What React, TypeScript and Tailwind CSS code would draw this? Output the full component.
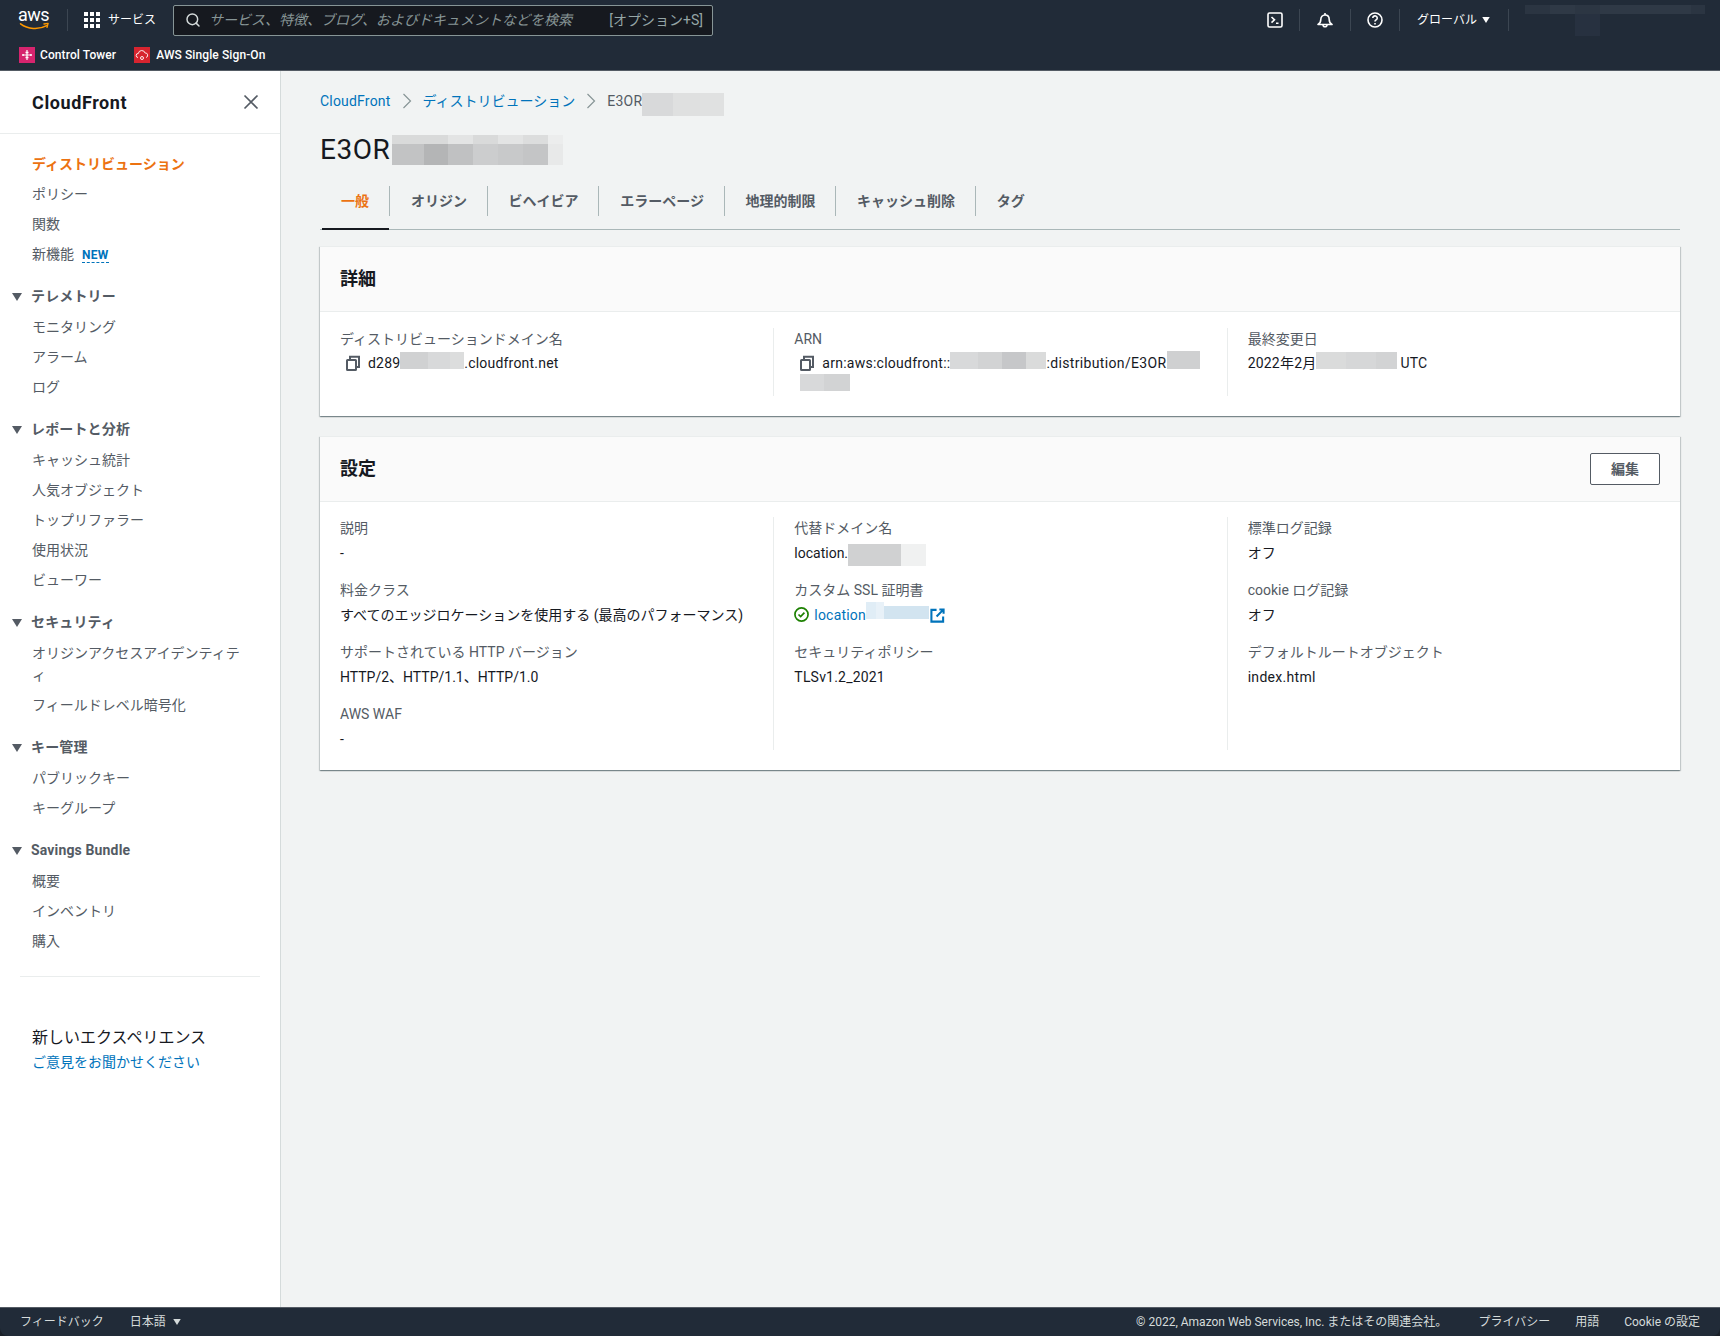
import { Search } from "lucide-react";
import type { ReactNode } from "react";

const sans = "font-['Roboto','Noto_Sans_CJK_JP',sans-serif]";

function Caret({ className }: { className: string }) {
  return (
    <svg viewBox="0 0 10 8" className={className} fill="currentColor">
      <path d="M0 0h10L5 8z" />
    </svg>
  );
}

function Sep() {
  return <div className="h-[22px] w-px bg-[#3c4652]" />;
}

function AwsLogo() {
  return (
    <div className="relative h-[26px] w-[33px]">
      <span className="absolute left-0 top-[-3px] text-[18px] leading-[22px] tracking-[-0.5px] text-white">aws</span>
      <svg viewBox="0 0 33 10" className="absolute bottom-[2px] left-0 h-[9px] w-[33px]" fill="none">
        <path d="M1 2c8 6 20 7 29 2" stroke="#f90" strokeWidth="1.7" strokeLinecap="round" />
        <path d="M27 2.2l4.6-.6-1.2 4.4" stroke="#f90" strokeWidth="1.5" strokeLinecap="round" strokeLinejoin="round" />
      </svg>
    </div>
  );
}

function GridIcon() {
  return (
    <svg viewBox="0 0 16 16" className="h-4 w-4" fill="#fff">
      <rect x="0" y="0" width="4" height="4" />
      <rect x="6" y="0" width="4" height="4" />
      <rect x="12" y="0" width="4" height="4" />
      <rect x="0" y="6" width="4" height="4" />
      <rect x="6" y="6" width="4" height="4" />
      <rect x="12" y="6" width="4" height="4" />
      <rect x="0" y="12" width="4" height="4" />
      <rect x="6" y="12" width="4" height="4" />
      <rect x="12" y="12" width="4" height="4" />
    </svg>
  );
}

function CopyIcon() {
  return (
    <svg viewBox="0 0 16 16" className="h-4 w-4 shrink-0" fill="none" stroke="#545b64" strokeWidth="2">
      <rect x="2" y="5" width="9" height="10" rx="0.5" />
      <path d="M5 5V1.800h9V12h-3" />
    </svg>
  );
}

function Header() {
  return (
    <header className="h-[71px] shrink-0 border-b border-[#545b64] bg-[#212b38]">
      <div className="flex h-10 items-center pl-[18px] pr-[15px]">
        <AwsLogo />
        <div className="ml-[16px] h-[22px] w-px bg-[#3c4652]" />
        <div className="ml-4 flex items-center gap-2 text-[12px] text-white">
          <GridIcon />
          <span>サービス</span>
        </div>
        <div className="ml-[17px] flex h-[31px] w-[540px] items-center rounded-[2px] border border-[#879596] bg-[#16191f] pl-[11px] pr-[9px]">
          <Search className="h-4 w-4 text-[#d5dbdb]" strokeWidth={2.2} />
          <span className="ml-[8px] text-[14px] italic text-[#879596]">サービス、特徴、ブログ、およびドキュメントなどを検索</span>
          <span className="ml-auto text-[14px] text-[#95a5a6]">[オプション+S]</span>
        </div>
        <div className="ml-auto flex items-center">
          <svg viewBox="0 0 16 16" className="h-4 w-4" fill="none" stroke="#fff" strokeWidth="1.6">
            <rect x="1" y="1" width="14" height="14" rx="1.5" />
            <path d="M4.500 5l3 2.800-3 2.800M9 11.200h2.500" />
          </svg>
          <div className="mx-4"><Sep /></div>
          <svg viewBox="0 0 16 16" className="mx-[1px] h-4 w-4" fill="none" stroke="#fff" strokeWidth="1.6" strokeLinejoin="round">
            <path d="M1 12.500c1.800-1 2.800-2.500 2.800-5 0-2.600 1.700-4.500 4.200-4.500s4.200 1.900 4.200 4.500c0 2.500 1 4 2.800 5z" />
            <path d="M8 1v2M6 12.800a2 2 0 004 0" />
          </svg>
          <div className="mx-4"><Sep /></div>
          <svg viewBox="0 0 16 16" className="h-4 w-4" fill="none" stroke="#fff" strokeWidth="1.6">
            <circle cx="8" cy="8" r="7" />
            <path d="M5.800 6a2.200 2.200 0 114 1.300c-.8.8-1.800 1.100-1.800 2.200" />
            <path d="M8 11v1.500" />
          </svg>
          <div className="ml-4 mr-[17px]"><Sep /></div>
          <span className="text-[12px] text-white">グローバル</span>
          <Caret className="ml-[5px] h-[6px] w-2 text-white" />
          <div className="ml-[18px]"><Sep /></div>
          <div className="ml-[16px] flex w-[180px] flex-col">
            <div className="flex">
              <div className="h-[9px] w-[25px] bg-[#2b3542]" />
              <div className="h-[9px] w-[25px] bg-[#2f3946]" />
              <div className="h-[9px] w-[25px] bg-[#2c3643]" />
              <div className="h-[9px] w-[91px] bg-[#2f3946]" />
              <div className="h-[9px] w-[14px] bg-[#2b3542]" />
            </div>
            <div className="ml-[50px] h-[22px] w-[25px] bg-[#273140]" />
          </div>
        </div>
      </div>
      <div className="flex h-[30px] items-center pl-[19px] text-[12px] font-medium tracking-[0.1px] text-white">
        <svg viewBox="0 0 16 16" className="h-4 w-4">
          <rect width="16" height="16" fill="#d6246e" />
          <path d="M8 3v10M4 8h8" stroke="#fff" strokeWidth="1.200" />
          <path d="M3 8h2M11 8h2M6.500 5.500h3M6.500 10.500h3" stroke="#fff" strokeWidth="1.500" />
        </svg>
        <span className="ml-[5px]">Control Tower</span>
        <svg viewBox="0 0 16 16" className="ml-[18px] h-4 w-4">
          <rect width="16" height="16" fill="#d7242f" />
          <path d="M4 10.500a2 2 0 01.3-4 3.500 3.500 0 016.800-.5 2.300 2.300 0 01.9 4.500" fill="none" stroke="#fff" strokeWidth="0.900" />
          <circle cx="8" cy="11" r="1.500" fill="none" stroke="#fff" strokeWidth="0.900" />
        </svg>
        <span className="ml-[6px]">AWS Single Sign-On</span>
      </div>
    </header>
  );
}

function NavItem({ children, className = "text-[#545b64]" }: { children: ReactNode; className?: string }) {
  return <div className={`pl-8 pr-[36px] py-[4px] text-[14px] leading-[22px] ${className}`}>{children}</div>;
}

function NavSection({ title, items }: { title: string; items: string[] }) {
  return (
    <div className="mt-3">
      <div className="flex h-[31px] items-center pl-[12px] text-[14px] font-bold tracking-[0.15px] text-[#545b64]">
        <Caret className="mr-[9px] h-2 w-[10px]" />
        {title}
      </div>
      {items.map((item) => (
        <NavItem key={item}>{item}</NavItem>
      ))}
    </div>
  );
}

function Sidebar() {
  return (
    <aside className="flex w-[281px] shrink-0 flex-col border-r border-[#d5dbdb] bg-white">
      <div className="flex h-[63px] shrink-0 items-center justify-between border-b border-[#eaeded] pl-8 pr-[21px]">
        <h2 className="text-[18px] font-bold tracking-[0.6px] text-[#16191f]">CloudFront</h2>
        <svg viewBox="0 0 16 16" className="h-4 w-4" fill="none" stroke="#545b64" strokeWidth="1.700">
          <path d="M1.500 1.500l13 13M14.500 1.500l-13 13" />
        </svg>
      </div>
      <div className="mt-[15px]">
        <NavItem className="font-bold text-[#ec7211]">ディストリビューション</NavItem>
        <NavItem>ポリシー</NavItem>
        <NavItem>関数</NavItem>
        <NavItem>
          新機能
          <span className="ml-2 border-b border-dashed border-[#0073bb] text-[12px] font-bold leading-[14px] tracking-[0.3px] text-[#0073bb]">NEW</span>
        </NavItem>
      </div>
      <NavSection title="テレメトリー" items={["モニタリング", "アラーム", "ログ"]} />
      <NavSection title="レポートと分析" items={["キャッシュ統計", "人気オブジェクト", "トップリファラー", "使用状況", "ビューワー"]} />
      <NavSection title="セキュリティ" items={["オリジンアクセスアイデンティティ", "フィールドレベル暗号化"]} />
      <NavSection title="キー管理" items={["パブリックキー", "キーグループ"]} />
      <NavSection title="Savings Bundle" items={["概要", "インベントリ", "購入"]} />
      <div className="mx-5 mt-5 border-t border-[#eaeded]" />
      <div className="mt-[49px] pl-8 text-[16px] leading-[24px] text-[#16191f]">新しいエクスペリエンス</div>
      <div className="pl-8 text-[14px] leading-[24px] text-[#0073bb]">ご意見をお聞かせください</div>
    </aside>
  );
}

function Chevron() {
  return (
    <svg viewBox="0 0 10 16" className="mx-[11px] h-4 w-[10px]" fill="none" stroke="#879596" strokeWidth="1.200">
      <path d="M1.500 1l7 7-7 7" />
    </svg>
  );
}

function Tabs() {
  const tabs = ["オリジン", "ビヘイビア", "エラーページ", "地理的制限", "キャッシュ削除", "タグ"];
  return (
    <div className="mt-[21px] flex h-[44px] border-b border-[#aab7b8] pb-[13px] text-[14px] font-bold text-[#545b64]">
      <div className="relative ml-px flex items-center px-5 text-[#ec7211]">
        一般
        <div className="absolute bottom-[-14px] left-px right-0 h-[2px] bg-[#16191f]" />
      </div>
      {tabs.map((tab) => (
        <div key={tab} className="flex items-center border-l border-[#aab7b8] pl-[21px] pr-[19.6px]">
          {tab}
        </div>
      ))}
    </div>
  );
}

function Card({ title, action, children }: { title: string; action?: ReactNode; children: ReactNode }) {
  return (
    <section className="border-t border-[#eaeded] bg-white shadow-[0_1px_1px_0_rgba(0,28,36,0.3),1px_1px_1px_0_rgba(0,28,36,0.15),-1px_1px_1px_0_rgba(0,28,36,0.15)]">
      <div className="flex h-[65px] items-center justify-between border-b border-[#eaeded] bg-[#fafafa] px-5">
        <h2 className="mb-[2px] text-[18px] font-bold text-[#16191f]">{title}</h2>
        {action}
      </div>
      {children}
    </section>
  );
}

function Column({ children, first = false }: { children: ReactNode; first?: boolean }) {
  return <div className={`flex flex-col gap-[15px] px-5 ${first ? "" : "border-l border-[#eaeded]"}`}>{children}</div>;
}

function Field({ label, tight = false, children }: { label: string; tight?: boolean; children: ReactNode }) {
  return (
    <div className="text-[14px] leading-[22px]">
      <div className="text-[#545b64]">{label}</div>
      <div className={`${tight ? "mt-[2px]" : "mt-[3px]"} text-[#16191f]`}>{children}</div>
    </div>
  );
}

function Details() {
  return (
    <Card title="詳細">
      <div className="grid grid-cols-3 pb-[20px] pt-[16px]">
        <Column first>
          <Field tight label="ディストリビューションドメイン名">
            <div className="flex items-start pl-[5px]">
              <span className="mt-[3px]"><CopyIcon /></span>
              <span className="ml-[7px] flex tracking-[0.2px]">
                d289
                <span className="flex self-start"><span className="h-[17px] w-[28px] bg-[#d0d1d2]" /><span className="h-[17px] w-[22px] bg-[#d8d9da]" /><span className="h-[17px] w-[14px] bg-[#dcdddd]" /></span>
                .cloudfront.net
              </span>
            </div>
          </Field>
        </Column>
        <Column>
          <Field tight label="ARN">
            <div className="flex items-start pl-[5px]">
              <span className="mt-[3px]"><CopyIcon /></span>
              <div className="ml-[7px]">
                <div className="flex tracking-[0.25px]">
                  arn:aws:cloudfront::
                  <span className="flex self-start"><span className="h-[17px] w-[28px] bg-[#d8d9da]" /><span className="h-[17px] w-[24px] bg-[#d2d3d4]" /><span className="h-[17px] w-[24px] bg-[#c6c7c9]" /><span className="h-[17px] w-[20px] bg-[#dadbdb]" /></span>
                  <span className="tracking-[0.35px]">:distribution/E3OR</span>
                  <span className="-mt-px h-[18px] w-[33px] bg-[#cfd0d1]" />
                </div>
                <div className="ml-[-22px] flex h-[22px] items-start">
                  <span className="h-[17px] w-[24px] bg-[#d8d9da]" />
                  <span className="h-[17px] w-[26px] bg-[#d2d3d4]" />
                </div>
              </div>
            </div>
          </Field>
        </Column>
        <Column>
          <Field tight label="最終変更日">
            <div className="flex">
              <span className="tracking-[0.2px]">2022年2月</span>
              <span className="flex self-start"><span className="h-[17px] w-[30px] bg-[#dadbdb]" /><span className="h-[17px] w-[30px] bg-[#d6d7d8]" /><span className="h-[17px] w-[21px] bg-[#d2d3d4]" /></span>
              <span className="ml-[3px] tracking-[0.2px]">UTC</span>
            </div>
          </Field>
        </Column>
      </div>
    </Card>
  );
}

function Settings() {
  return (
    <Card
      title="設定"
      action={
        <button className="h-[32px] w-[70px] rounded-[2px] border border-[#545b64] bg-white text-[14px] font-bold text-[#545b64]">編集</button>
      }
    >
      <div className="grid grid-cols-3 pb-[20px] pt-[15px]">
        <Column first>
          <Field label="説明">-</Field>
          <Field label="料金クラス">すべてのエッジロケーションを使用する (最高のパフォーマンス)</Field>
          <Field label="サポートされている HTTP バージョン">HTTP/2、HTTP/1.1、HTTP/1.0</Field>
          <Field label="AWS WAF">-</Field>
        </Column>
        <Column>
          <Field label="代替ドメイン名">
            <div className="flex h-[22px] items-start">
              location.
              <span className="mt-[2px] h-[22px] w-[53px] bg-[#d0d1d2]" />
              <span className="mt-[2px] h-[22px] w-[25px] bg-[#f0f1f1]" />
            </div>
          </Field>
          <Field label="カスタム SSL 証明書">
            <div className="flex h-[22px] items-start tracking-[0.2px] text-[#0073bb]">
              <svg viewBox="0 0 16 16" className="mr-[5px] mt-[3px] h-[15px] w-[15px]" fill="none" stroke="#1d8102" strokeWidth="1.800">
                <circle cx="8" cy="8" r="7" />
                <path d="M4.800 8l2.300 2.300 4-4.300" />
              </svg>
              location
              <span className="-mt-[2px] h-[17px] w-[10px] bg-[#e0edf6]" />
              <span className="-mt-[2px] h-[17px] w-[8px] bg-[#e8f1f8]" />
              <span className="mt-[2px] h-[13px] w-[45px] bg-[#d2e4f0]" />
              <svg viewBox="0 0 16 16" className="ml-[1px] mt-[4px] h-[15px] w-[15px]" fill="none" stroke="#0073bb" strokeWidth="2.200">
                <path d="M7 2H1.500v12.500H14V9" />
                <path d="M10 1.500h4.500V6M14 2L7 9" />
              </svg>
            </div>
          </Field>
          <Field label="セキュリティポリシー"><span className="tracking-[0.2px]">TLSv1.2_2021</span></Field>
        </Column>
        <Column>
          <Field label="標準ログ記録">オフ</Field>
          <Field label="cookie ログ記録">オフ</Field>
          <Field label="デフォルトルートオブジェクト"><span className="tracking-[0.3px]">index.html</span></Field>
        </Column>
      </div>
    </Card>
  );
}

function Main() {
  return (
    <main className="flex-1 bg-[#f1f3f3] pr-10">
      <div className="pl-[39px] pt-[19px]">
        <div className="flex h-[22px] items-center text-[14px] text-[#0073bb]">
          <span className="tracking-[0.2px]">CloudFront</span>
          <Chevron />
          <span>ディストリビューション</span>
          <Chevron />
          <span className="tracking-[0.2px] text-[#545b64]">E3OR</span>
          <span className="mt-[3px] flex self-start">
            <span className="h-[23px] w-[31px] bg-[#d8d9da]" />
            <span className="h-[23px] w-[27px] bg-[#dfe0e0]" />
            <span className="h-[23px] w-[24px] bg-[#e0e1e1]" />
          </span>
        </div>
        <div className="mt-[22px] flex h-[31px] items-center">
          <h1 className="text-[28px] leading-[31px] tracking-[0.5px] text-[#16191f]">E3OR</h1>
          <div className="ml-[2px] flex flex-col">
            <div className="flex">
              <span className="h-[9px] w-[56px] bg-[#d9dada]" />
              <span className="h-[9px] w-[25px] bg-[#e3e4e4]" />
              <span className="h-[9px] w-[25px] bg-[#d9dada]" />
              <span className="h-[9px] w-[25px] bg-[#e3e4e4]" />
              <span className="h-[9px] w-[25px] bg-[#dcdddd]" />
              <span className="h-[9px] w-[15px] bg-[#eceded]" />
            </div>
            <div className="flex">
              <span className="h-[21px] w-[32px] bg-[#c2c3c4]" />
              <span className="h-[21px] w-[24px] bg-[#b4b5b6]" />
              <span className="h-[21px] w-[25px] bg-[#c0c1c2]" />
              <span className="h-[21px] w-[25px] bg-[#cccdce]" />
              <span className="h-[21px] w-[25px] bg-[#c8c9ca]" />
              <span className="h-[21px] w-[25px] bg-[#c4c5c6]" />
              <span className="h-[21px] w-[15px] bg-[#e8e9e9]" />
            </div>
          </div>
        </div>
        <Tabs />
        <div className="mt-[16px] flex flex-col gap-[20px]">
          <Details />
          <Settings />
        </div>
      </div>
    </main>
  );
}

function Footer() {
  return (
    <footer className="flex h-[29px] shrink-0 items-center rounded-b-[8px] border-t border-[#545b64] bg-[#212b38] pl-5 pr-5 text-[12px] text-[#d5dbdb]">
      <span>フィードバック</span>
      <span className="ml-[26px]">日本語</span>
      <Caret className="ml-[7px] h-[6px] w-2" />
      <span className="ml-auto">© 2022, Amazon Web Services, Inc. またはその関連会社。</span>
      <span className="ml-[31px]">プライバシー</span>
      <span className="ml-[25px]">用語</span>
      <span className="ml-[25px]">Cookie の設定</span>
    </footer>
  );
}

export default function App() {
  return (
    <div className={`flex h-[1336px] w-[1720px] flex-col overflow-hidden bg-[#1a2029] ${sans}`}>
      <Header />
      <div className="flex min-h-0 flex-1">
        <Sidebar />
        <Main />
      </div>
      <Footer />
    </div>
  );
}
